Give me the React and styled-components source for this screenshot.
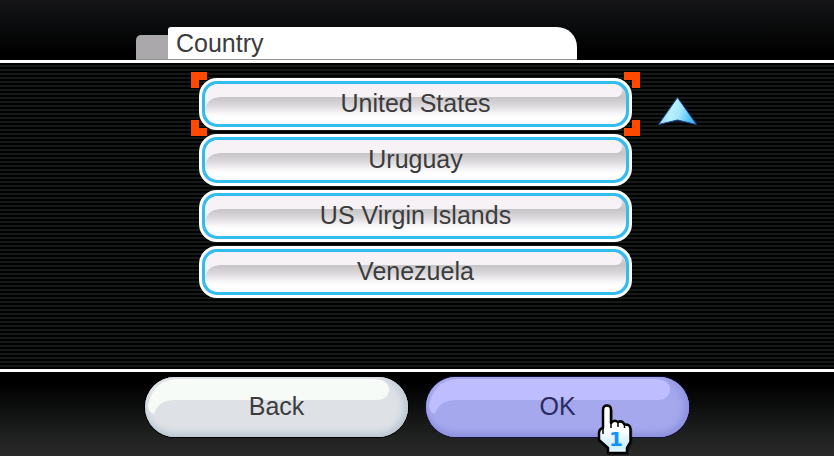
import React, { useState } from "react";
import styled, { createGlobalStyle, css } from "styled-components";

const GlobalStyle = createGlobalStyle`
  *, *::before, *::after { box-sizing: border-box; }
  body {
    margin: 0;
    background: #000;
    font-family: "Liberation Sans", Arial, sans-serif;
    font-size: 25px;
    line-height: 32px;
    color: #3c3c3c;
  }
  button { font: inherit; color: inherit; border: 0; margin: 0; padding: 0; cursor: pointer; }
`;

const Screen = styled.div`
  min-height: 100vh;
  display: flex;
  flex-direction: column;
  overflow: hidden;
`;

const Header = styled.header`
  height: 63px;
  display: flex;
  justify-content: center;
  align-items: flex-end;
  background: linear-gradient(#141416 0, #0b0c0d 24px, #000 52px);
  border-bottom: 3px solid #fff;
`;

const Tabs = styled.div`
  display: flex;
  align-items: flex-end;
  width: 441px;
  margin-right: 121px;
  border-bottom: 1px solid #8f8f8f;
`;

const BackTab = styled.div`
  width: 32px;
  height: 24px;
  border-radius: 5px 0 0 0;
  background: #aba8ac;
`;

const Title = styled.h1`
  flex: 1;
  margin: 0;
  padding: 0 8px;
  height: 32px;
  border-radius: 3px 20px 0 0;
  background: #fff;
  font-size: 25px;
  font-weight: 400;
`;

const Main = styled.main`
  flex: 1;
  display: flex;
  justify-content: center;
  padding: 15px 0;
  background: repeating-linear-gradient(#000 0 2px, #141a18 2px 4px);
`;

const List = styled.ul`
  position: relative;
  display: flex;
  flex-direction: column;
  gap: 4px;
  width: 433px;
  margin: 0 3px 0 0;
  padding: 0;
  list-style: none;
`;

const Item = styled.li`
  position: relative;
  height: 52px;
`;

const Option = styled.button`
  position: relative;
  width: 100%;
  height: 52px;
  border-radius: 18px;
  border: 3px solid #fff;
  background: #33bdee;
  padding: 3px;
`;

const OptionFace = styled.span`
  position: relative;
  display: flex;
  align-items: center;
  justify-content: center;
  height: 40px;
  padding-bottom: 2px;
  border-radius: 13px;
  overflow: hidden;
  background: linear-gradient(#e4e2e4 0, #c6c4c6 13px, #d9d7d9 21px, #f6f4f6 29px, #fff 33px);

  &::before {
    content: "";
    position: absolute;
    top: 0;
    left: 0;
    right: 4px;
    height: 13px;
    border-radius: 0 12px 10px 0;
    background: #f6f2f6;
  }

  &::after {
    content: "";
    position: absolute;
    top: 12px;
    left: 0;
    width: 14px;
    height: 11px;
    background: radial-gradient(ellipse 13px 10px at 14px 11px, transparent 92%, #f6f2f6);
  }
`;

const Label = styled.span`
  position: relative;
`;

const Corner = styled.span`
  position: absolute;
  width: 16px;
  height: 16px;
  z-index: 1;
  border: 0 solid #ff4800;
  ${({ $v }) => ($v === "top" ? css`top: -6px; border-top-width: 8px;` : css`bottom: -6px; border-bottom-width: 8px;`)}
  ${({ $h }) => ($h === "left" ? css`left: -8px; border-left-width: 8px;` : css`right: -8px; border-right-width: 8px;`)}
`;

const ScrollUp = styled.button`
  position: absolute;
  top: 17px;
  left: calc(100% + 25px);
  width: 41px;
  height: 32px;
  background: none;
  svg { display: block; }
`;

const Footer = styled.footer`
  display: flex;
  justify-content: center;
  gap: 18px;
  height: 87px;
  padding-top: 5px;
  border-top: 3px solid #fff;
  background: linear-gradient(#000 10px, #0a0b0b 30px, #181a19 52px, #2b2a2b 84px);
`;

const palettes = {
  plain: { shine: "#f7fbf8", face: "#dee2e7", edge: "#bcc8d2", rim: "#e9e9f0", text: "#3c3c3c", outline: "#000" },
  active: { shine: "#bdbdff", face: "#a6a8ee", edge: "#8e92dc", rim: "#b2b0f4", text: "#2b2a60", outline: "#14123c" },
};

const Pill = styled.button`
  position: relative;
  display: block;
  width: 263px;
  height: 60px;
  padding-bottom: 2px;
  border-radius: 30px;
  overflow: hidden;
  color: ${({ $p }) => $p.text};
  background: ${({ $p }) => $p.face};
  box-shadow:
    0 0 0 1px ${({ $p }) => $p.outline},
    inset 0 -5px 6px -1px ${({ $p }) => $p.edge},
    inset -6px 0 8px -2px ${({ $p }) => $p.edge},
    inset 0 2px 2px ${({ $p }) => $p.rim};
`;

const PillShine = styled.svg`
  position: absolute;
  top: 0;
  left: 0;
  width: 100%;
  height: 60px;
`;

const PointerHolder = styled.span`
  position: absolute;
  z-index: 2;
  top: 25px;
  right: 55px;
  pointer-events: none;
  svg { display: block; }
`;

const PillWrap = styled.div`
  position: relative;
`;

function PillButton({ palette, children }) {
  const p = palettes[palette];
  return (
    <Pill type="button" $p={p}>
      <PillShine viewBox="0 0 263 60" aria-hidden="true">
        <path d="M30 2H230Q244 3 244 13Q243 23 231 23H30Q13 23 9 37Q3 35 3 28Q8 4 30 2Z" fill={p.shine} />
      </PillShine>
      <Label>{children}</Label>
    </Pill>
  );
}

function ArrowUp() {
  return (
    <svg width="41" height="32" viewBox="0 0 41 32" aria-hidden="true">
      <defs>
        <linearGradient id="arrow" x1="0" x2="1" y1="0" y2="0.25">
          <stop offset="0" stopColor="#63c4f6" />
          <stop offset="0.45" stopColor="#b8f0ff" />
          <stop offset="0.65" stopColor="#a4e8fe" />
          <stop offset="1" stopColor="#48bdf5" />
        </linearGradient>
      </defs>
      <path d="M20.5 2.5L39.5 29.5L20.5 25L1.5 29.5Z" fill="url(#arrow)" stroke="#174a9c" strokeWidth="1" />
    </svg>
  );
}

const handShape =
  "M9 8Q9 3.5 13 3.5Q17 3.5 17 8V21Q20 17 24 20Q28 18 30.500 22.500Q36.500 22 36.500 27V40L33 46V51H14V46L5 38V31Q5 27 9 26Z";

function Hand() {
  return (
    <svg width="40" height="54" viewBox="0 0 40 54" aria-hidden="true">
      <defs>
        <linearGradient id="glove" x1="0" x2="0" y1="0" y2="1">
          <stop offset="0.5" stopColor="#fff" />
          <stop offset="0.85" stopColor="#cdeeff" />
          <stop offset="1" stopColor="#e8f8ff" />
        </linearGradient>
      </defs>
      <path d={handShape} transform="translate(2 2)" fill="#000" opacity="0.25" />
      <path d={handShape} fill="url(#glove)" stroke="#000" strokeWidth="2.5" strokeLinejoin="round" />
      <path d="M9 25V32M17 20V26M24 20V25M30.500 22V26" fill="none" stroke="#000" strokeWidth="1.5" />
      <text x="22" y="44" textAnchor="middle" fontFamily="DejaVu Sans, sans-serif" fontWeight="700" fontSize="20" fill="#1093ff">1</text>
    </svg>
  );
}

const countries = ["United States", "Uruguay", "US Virgin Islands", "Venezuela"];

export default function App() {
  const [selected, setSelected] = useState(countries[0]);
  return (
    <Screen>
      <GlobalStyle />
      <Header>
        <Tabs>
          <BackTab />
          <Title>Country</Title>
        </Tabs>
      </Header>
      <Main>
        <List>
          {countries.map((name) => (
            <Item key={name}>
              <Option type="button" aria-pressed={name === selected} onClick={() => setSelected(name)}>
                <OptionFace><Label>{name}</Label></OptionFace>
              </Option>
              {name === selected && (
                <>
                  <Corner $v="top" $h="left" />
                  <Corner $v="top" $h="right" />
                  <Corner $v="bottom" $h="left" />
                  <Corner $v="bottom" $h="right" />
                </>
              )}
            </Item>
          ))}
          <li>
            <ScrollUp type="button" aria-label="Scroll up"><ArrowUp /></ScrollUp>
          </li>
        </List>
      </Main>
      <Footer>
        <PillButton palette="plain">Back</PillButton>
        <PillWrap>
          <PillButton palette="active">OK</PillButton>
          <PointerHolder><Hand /></PointerHolder>
        </PillWrap>
      </Footer>
    </Screen>
  );
}
